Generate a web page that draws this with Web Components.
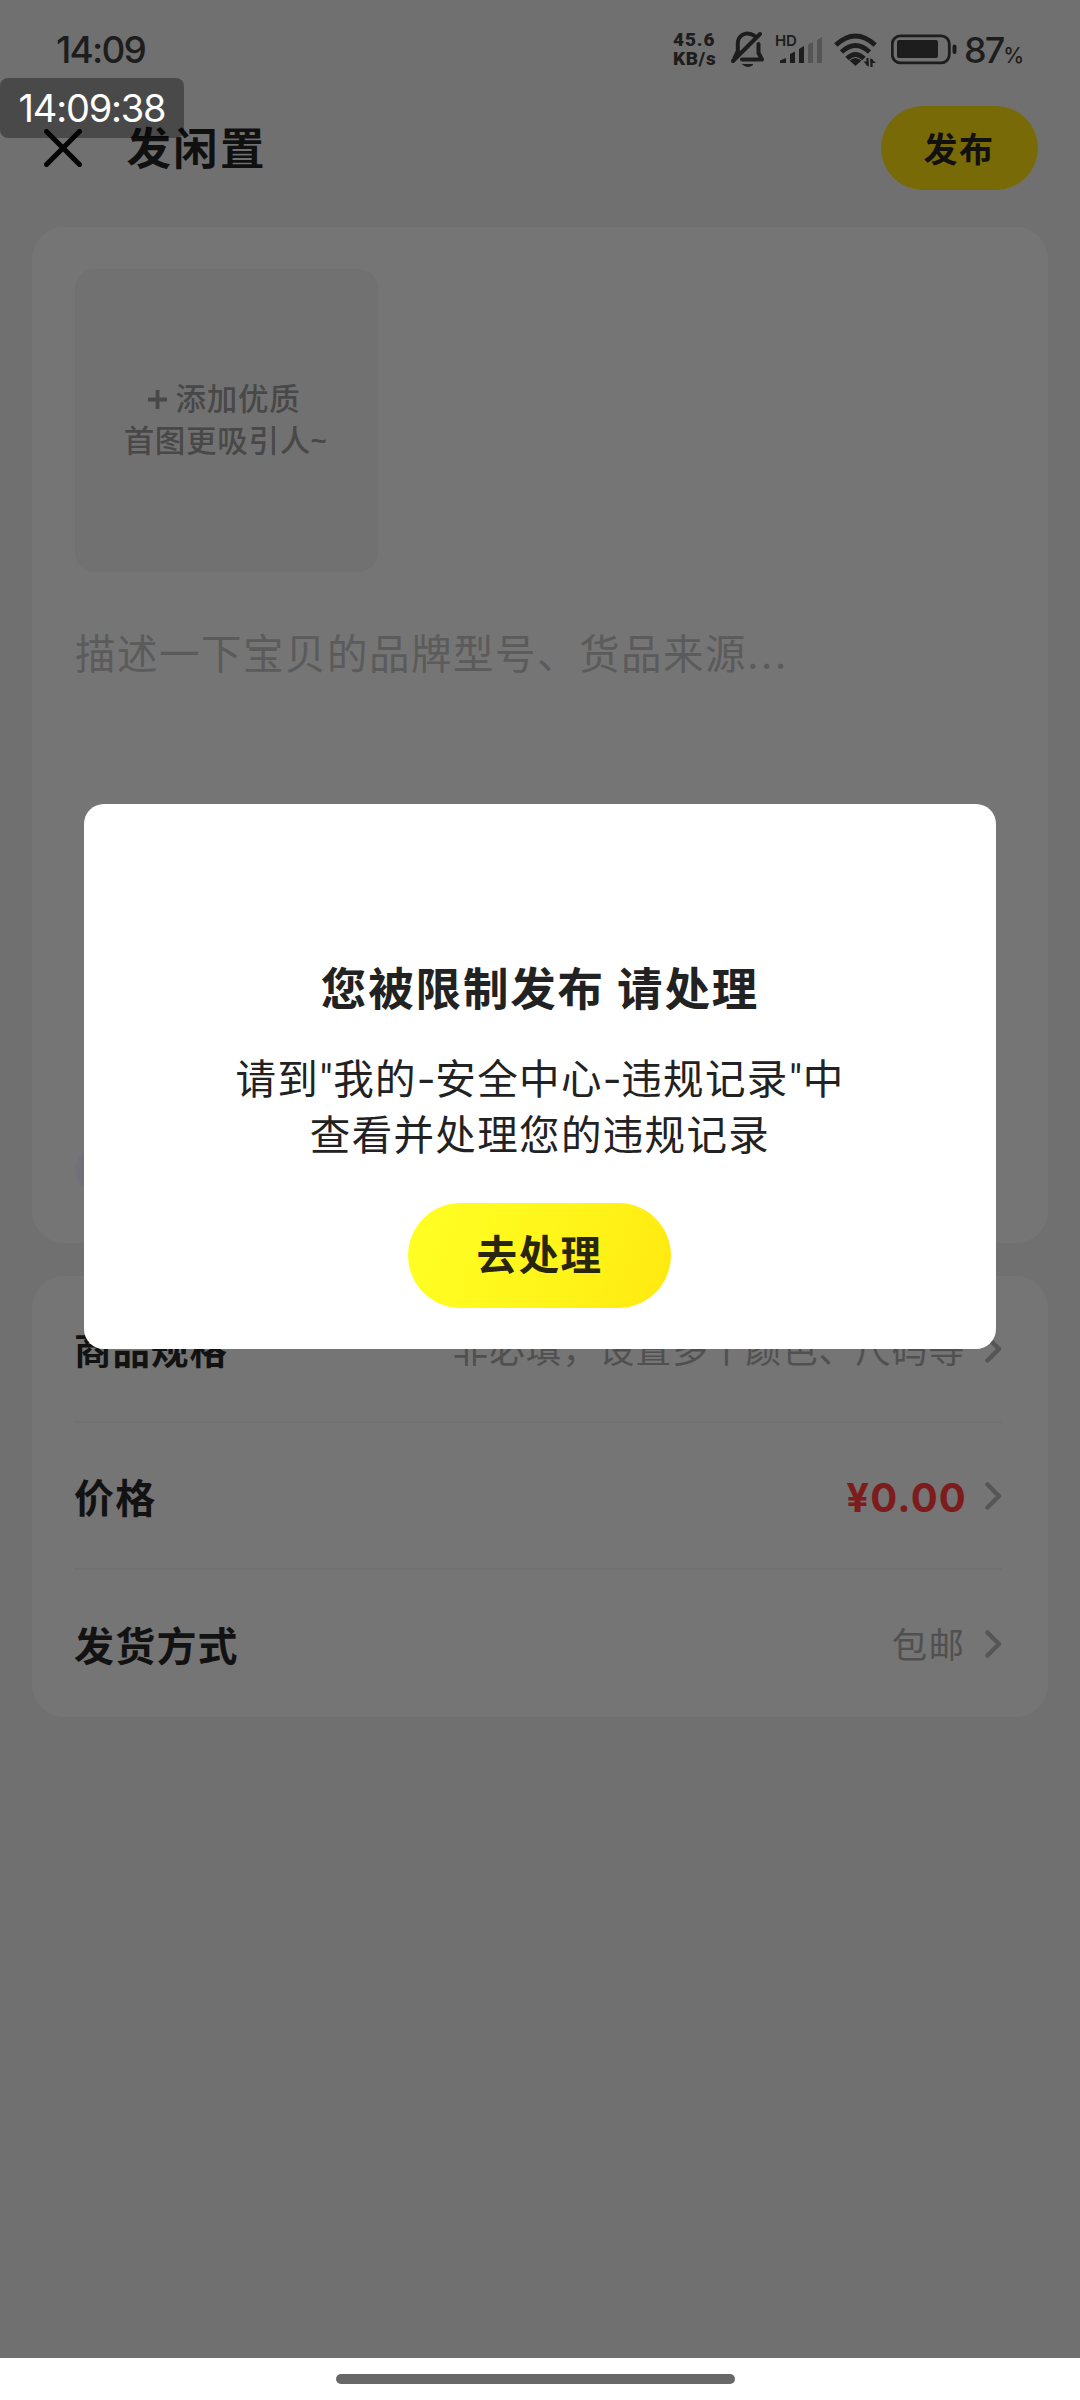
<!DOCTYPE html>
<html lang="zh-CN">
<head>
<meta charset="utf-8">
<title>发闲置</title>
<style>
html,body{margin:0;padding:0}
body{width:1080px;height:2400px;overflow:hidden;background:#707070;font-family:Inter,"Noto Sans CJK SC",sans-serif;position:relative}
</style>
</head>
<body>
<publish-page></publish-page>
<script>
function define(name, html, setup){
  customElements.define(name, class extends HTMLElement{
    constructor(){
      super();
      const t=document.createElement('template');
      t.innerHTML=html;
      this.attachShadow({mode:'open'}).append(t.content.cloneNode(true));
    }
    connectedCallback(){ if(setup) setup(this,this.shadowRoot); }
  });
}

define('status-bar',`<style>
:host{display:flex;height:100px;box-sizing:border-box;padding:0 57px 0 56px;align-items:flex-start;justify-content:space-between;color:#1d1d1d}
.time{font-size:37px;line-height:44px;margin-top:28px;font-weight:500;letter-spacing:-1.800px}
.right{display:flex;align-items:flex-start}
.net{width:58px;margin:30px 0 0 1px;font:900 19px/19px Roboto;white-space:nowrap;display:flex;flex-direction:column}
.net span{height:19px;letter-spacing:.9px}
.net span+span{letter-spacing:.6px}
svg{display:block}
.pct{display:flex;align-items:baseline;margin-left:7px;margin-top:28px;width:59px;line-height:44px;font-size:36px;font-weight:500;letter-spacing:-2px}
.pct small{font-size:21px;letter-spacing:0;font-weight:500}
.hd{display:block;font-size:15px;line-height:16px;font-weight:600;letter-spacing:-.2px}
.sig{width:48px;margin:33px 11px 0 10px;height:31px;display:grid}
.sig>*{grid-area:1/1}
</style>
<div class="time">14:09</div>
<div class="right">
<div class="net"><span>45.6</span><span>KB/s</span></div>
<svg style="margin-top:31px" width="34" height="38" viewBox="0 0 34 38" fill="none" stroke="#1d1d1d" stroke-width="4" stroke-linecap="round" stroke-linejoin="round"><path d="M23 4.500C14-.5 6.500 5 6.800 13V20L3.500 27M11 28.500H31L27.500 22V13M2 30L29 3"/><path d="M12 33.500H22Q17 37.500 12 33.500Z" fill="#1d1d1d" stroke-width="1"/></svg>
<div class="sig"><span class="hd">HD</span><svg width="48" height="31" viewBox="0 0 48 31"><path d="M5 30V27.500L11 25V30ZM15 30V21L20 18.500V30ZM24 30V16L29 13V30Z" fill="#1d1d1d"/><path d="M33 30V11.500L38 9V30ZM42 30V7L47 4V30Z" fill="#555"/></svg></div>
<svg style="margin-top:32px" width="44" height="36" viewBox="0 0 44 36" fill="none" stroke="#1d1d1d" stroke-width="4.800"><path d="M1.800 13Q21.500-5 41.200 13M7.500 20Q21.500 7 35.500 20M13 26.500Q21.500 18.500 30 26.500"/><path d="M21.500 34L15.500 28.500Q21.500 23.500 27.500 28.500Z" fill="#1d1d1d" stroke="none"/><path d="M33.500 26V33.500M37.500 35V27" stroke-width="2.200"/><path d="M34.600 35L29.500 29.500H34.600ZM36.400 26L42 31H36.400Z" fill="#1d1d1d" stroke="none"/></svg>
<svg style="margin:34px 0 0 13px" width="66" height="31" viewBox="0 0 66 31"><rect x="1.300" y="1.800" width="57" height="27" rx="8" fill="none" stroke="#1d1d1d" stroke-width="2.800"/><rect x="6" y="6" width="41" height="18" rx="2" fill="#1d1d1d"/><rect x="61.500" y="10.500" width="4" height="9.500" rx="2" fill="#1d1d1d"/></svg>
<div class="pct">87<small>%</small></div>
</div>`);

define('clock-badge',`<style>
:host{display:flex;align-items:center;justify-content:center;position:absolute;left:0;top:78px;width:184px;height:60px;border-radius:8px;background:rgba(0,0,0,.34);color:#fff;font-size:38px;font-weight:400;letter-spacing:-1.200px}
</style><span><slot></slot></span>`);

define('page-header',`<style>
:host{display:flex;height:95px;align-items:center;padding:0 42px 0 44px}
svg{display:block;width:38px;height:38px}
h1{margin:3px auto 0 44.500px;font-size:44.500px;line-height:60px;font-weight:700;letter-spacing:2.300px;color:#101010}
button{width:157px;height:84px;border:0;border-radius:42px;background:#776a07;font:700 34px/84px "Noto Sans CJK SC",sans-serif;letter-spacing:1.500px;color:#131010;padding:0 1px 0 0}
</style>
<svg viewBox="0 0 38 38"><path d="M2.500 2.500L35.500 35.500M35.500 2.500L2.500 35.500" stroke="#050505" stroke-width="5" stroke-linecap="round"/></svg>
<h1><slot></slot></h1><button>发布</button>`);

define('surface-card',`<style>
:host{display:flex;flex-direction:column;margin:0 32px;border-radius:32px;background:#757575;padding:0 43px;box-sizing:border-box}
</style><slot></slot>`);

define('photo-picker',`<style>
:host{display:flex;flex-direction:column;align-items:center;margin-top:42px;width:303px;height:303px;padding:109px 2px 0 0;box-sizing:border-box;border-radius:20px;background:#717171;color:#484848;font-size:30.500px;line-height:42px;letter-spacing:.7px;font-weight:500}
div{display:flex;align-items:center;white-space:nowrap}
.a{margin-right:4px}
svg{margin-right:8px}
.t{font-family:"Liberation Sans";font-weight:700;font-size:27px}
</style><div class="a"><svg width="21" height="21" viewBox="0 0 21 21"><path d="M10.500 1V20M1 10.500H20" stroke="#484848" stroke-width="3.800"/></svg>添加优质</div><div>首图更吸引人<span class="t">~</span></div>`);

define('desc-field',`<style>
:host{display:block;margin-top:50px;font-size:40.500px;line-height:60px;letter-spacing:1.500px;color:#5b5b5b;white-space:nowrap;font-family:"Noto Sans CJK SC",sans-serif}
.dots{font-family:Inter;letter-spacing:2.200px}
</style><slot></slot><span class="dots">...</span>`);

define('tag-pill',`<style>
:host{display:block;width:160px;height:40px;margin:auto 0 53px;border-radius:20px;background:#717177}
</style>`);

define('option-row',`<style>
:host{display:flex;height:147px;align-items:center;color:#121212;box-sizing:border-box;border-bottom:2px solid #717171;margin-right:3px;margin-left:-1px}
:host([last]){border:0}
b{font-size:var(--ls,40px);letter-spacing:var(--lp,1.200px);margin:var(--lt,0) auto 0 0;font-weight:700}
span{font-size:35.500px;letter-spacing:1.100px;color:#505050;margin:-2px 20px 0 0}
:host([price]) span{font:700 40px/50px Inter;color:#7c1c1c;letter-spacing:1.200px;margin:5px 18px 0 0}
svg{display:block}
</style><b></b><span><slot></slot></span><svg width="17" height="28" viewBox="0 0 17 28"><path d="M2.500 2.500L14 14L2.500 25.500" fill="none" stroke="#565656" stroke-width="4.500" stroke-linecap="round" stroke-linejoin="round"/></svg>`,
(el,r)=>{r.querySelector('b').textContent=el.getAttribute('label');});

define('notice-dialog',`<style>
:host{display:flex;flex-direction:column;align-items:center;position:absolute;left:84px;top:804px;width:912px;height:545px;background:#fff;border-radius:20px;color:#222;box-sizing:border-box;padding-top:151px;font-family:"Noto Sans CJK SC",sans-serif}
h2{margin:0;font-size:45.500px;line-height:62px;font-weight:700;letter-spacing:1.850px;white-space:nowrap}
p{margin:32px 0 0;font-size:40.500px;line-height:56px;letter-spacing:1.350px;text-align:center;white-space:nowrap}
i{font:400 41px/1 Roboto;letter-spacing:0;display:inline-block;width:14px}
u{text-decoration:none;display:inline-block;width:18.500px;font:400 41px/1 Inter;letter-spacing:0}
button{margin:42px 1px 0 0;width:263px;height:105px;border:0;border-radius:52.500px;background:linear-gradient(110deg,#ffff24,#fff51a 55%,#ffe90f);font:700 40.500px/100px "Noto Sans CJK SC",sans-serif;letter-spacing:1.500px;color:#29260f;padding:0 0 6px}
</style>
<h2>您被限制发布 请处理</h2>
<p>请到<i>"</i>我的<u>-</u>安全中心<u>-</u>违规记录<i>"</i>中<br>查看并处理您的违规记录</p>
<button>去处理</button>`);

define('gesture-bar',`<style>
:host{display:flex;height:42px;background:#fff;justify-content:center;box-sizing:border-box;padding:16px 9px 0 0;margin-top:auto}
div{width:399px;height:10px;border-radius:5px;background:#686868}
</style><div></div>`);

define('publish-page',`<style>
:host{display:flex;flex-direction:column;height:2400px;width:1080px}
</style>
<status-bar></status-bar>
<page-header>发闲置</page-header>
<surface-card style="height:1016px;margin-top:32px"><photo-picker></photo-picker><desc-field>描述一下宝贝的品牌型号、货品来源</desc-field><tag-pill></tag-pill></surface-card>
<surface-card style="height:441px;margin-top:33px">
<option-row label="商品规格" style="--ls:37.500px;--lp:1px;--lt:-3px">非必填，设置多个颜色、尺码等</option-row>
<option-row label="价格" price>¥0.00</option-row>
<option-row label="发货方式" last>包邮</option-row>
</surface-card>
<gesture-bar></gesture-bar>
<clock-badge>14:09:38</clock-badge>
<notice-dialog></notice-dialog>`);
</script>
</body>
</html>
